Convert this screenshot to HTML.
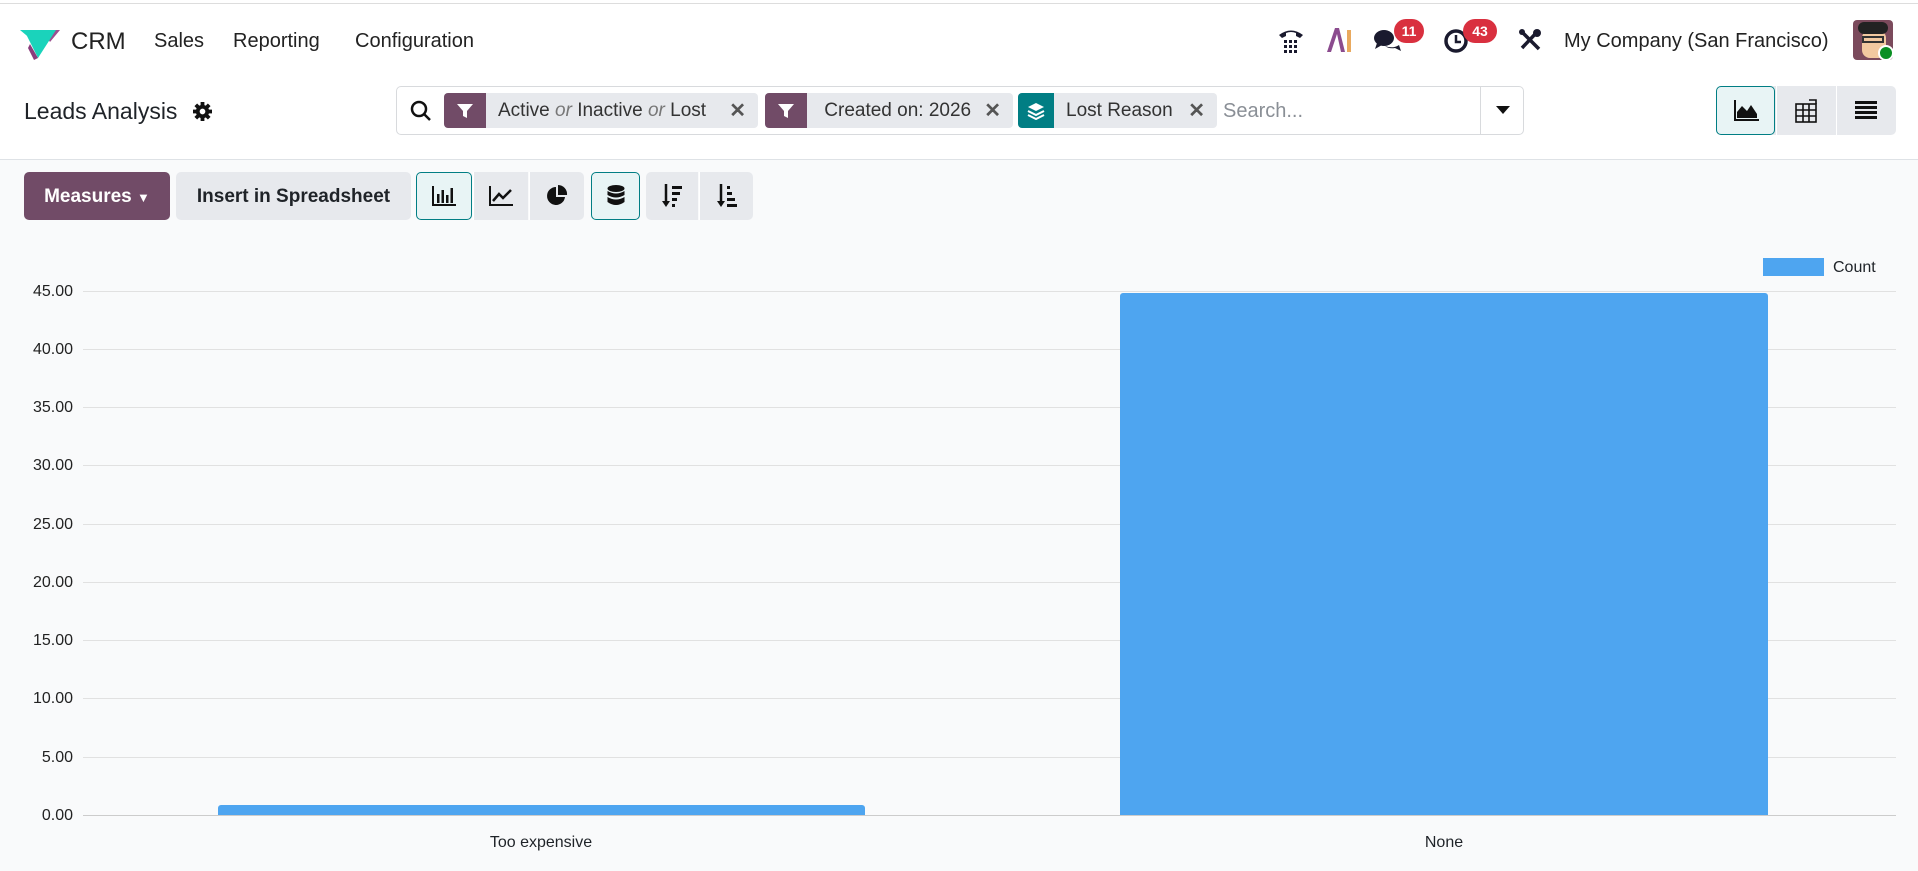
<!DOCTYPE html>
<html><head><meta charset="utf-8"><style>
*{box-sizing:border-box;margin:0;padding:0}
body{width:1918px;height:871px;background:#fff;font-family:"Liberation Sans",sans-serif;color:#1f2328;position:relative;overflow:hidden}
.a{position:absolute}
.nav{font-size:20px;color:#222}
.btn{position:absolute;background:#e7e9ed;border-radius:5px;height:48px;top:172px;display:flex;align-items:center;justify-content:center}
.chip{position:absolute;top:93px;height:35px;background:#e7e9ed;border-radius:4px;display:flex;align-items:center;font-size:19px;color:#333}
.chip .ic{width:42px;height:35px;border-radius:4px 0 0 4px;display:flex;align-items:center;justify-content:center;margin-right:12px}
.chip .x{margin-left:auto;margin-right:12px;color:#555;font-size:20px;font-weight:bold}
.yl{position:absolute;right:1845px;font-size:16px;color:#222;width:60px;text-align:right}
.gl{position:absolute;left:83px;width:1813px;height:1px;background:#e1e1e1}
</style></head><body>
<div class="a" style="left:0;top:3px;width:1918px;height:1px;background:#ddd"></div>
<svg class="a" style="left:20px;top:26px" width="40" height="36" viewBox="0 0 40 36"><polygon points="0,4 16,4 12,14" fill="#1ad3bb"/><polygon points="22,4 40,4 30,16" fill="#9b4f8f"/><polygon points="4,4 36,4 18,32" fill="#1ad3bb"/><polygon points="10,18 18,32 14,34 8,22" fill="#8a3c7c"/></svg>
<div class="a nav" style="left:71px;top:28px;font-size:24px">CRM</div>
<div class="a nav" style="left:154px;top:30px">Sales</div>
<div class="a nav" style="left:233px;top:30px">Reporting</div>
<div class="a nav" style="left:355px;top:30px">Configuration</div>
<svg class="a" style="left:1277px;top:26px" width="28" height="28" viewBox="0 0 28 28"><path d="M2 9 Q14 0 26 9 L23 12 L19 10 L19 7 Q14 5 9 7 L9 10 L5 12 Z" fill="#1a1a2e"/><g fill="#1a1a2e"><rect x="7" y="14" width="3" height="3"/><rect x="12" y="14" width="3" height="3"/><rect x="17" y="14" width="3" height="3"/><rect x="7" y="19" width="3" height="3"/><rect x="12" y="19" width="3" height="3"/><rect x="17" y="19" width="3" height="3"/><rect x="7" y="24" width="3" height="3"/><rect x="12" y="24" width="3" height="3"/><rect x="17" y="24" width="3" height="3"/></g></svg>
<svg class="a" style="left:1325px;top:28px" width="28" height="24" viewBox="0 0 28 24"><path d="M2 24 L10 0 L14 0 L20 24 L16 24 L12 6 L6 24Z" fill="#8b4b8e"/><rect x="22" y="2" width="4" height="22" fill="#e9a95e"/></svg>
<svg class="a" style="left:1373px;top:27px" width="30" height="28" viewBox="0 0 30 28"><ellipse cx="11" cy="11" rx="10" ry="8" fill="#1a1a2e"/><path d="M4 16 L2 22 L9 18Z" fill="#1a1a2e"/><path d="M12 19 Q20 22 26 18 L28 24 L22 21 Q16 22 12 19Z" fill="#1a1a2e"/></svg>
<div class="a" style="left:1394px;top:19px;width:30px;height:24px;border-radius:12px;background:#d9303f;color:#fff;font-size:14px;font-weight:bold;text-align:center;line-height:24px">11</div>
<svg class="a" style="left:1443px;top:27px" width="28" height="28" viewBox="0 0 28 28"><circle cx="13" cy="14" r="10" fill="none" stroke="#1a1a2e" stroke-width="3.5"/><path d="M13 8 V15 H18" stroke="#1a1a2e" stroke-width="2.5" fill="none"/></svg>
<div class="a" style="left:1463px;top:19px;width:34px;height:24px;border-radius:12px;background:#d9303f;color:#fff;font-size:14px;font-weight:bold;text-align:center;line-height:24px">43</div>
<svg class="a" style="left:1518px;top:28px" width="24" height="24" viewBox="0 0 24 24"><path d="M3 3 L21 21" stroke="#1a1a2e" stroke-width="3.5"/><path d="M20 3 L4 20" stroke="#1a1a2e" stroke-width="3.5"/><circle cx="19" cy="5" r="4" fill="#1a1a2e"/><circle cx="4" cy="4" r="3" fill="#1a1a2e"/></svg>
<div class="a nav" style="left:1564px;top:30px">My Company (San Francisco)</div>
<div class="a" style="left:1853px;top:20px;width:40px;height:40px;border-radius:4px;background:#7b4a5c;overflow:hidden"><div style="position:absolute;left:9px;top:10px;width:24px;height:28px;background:#f2c9a0;border-radius:8px"></div><div style="position:absolute;left:5px;top:2px;width:30px;height:12px;background:#222;border-radius:6px"></div><div style="position:absolute;left:9px;top:16px;width:22px;height:7px;border:2px solid #333"></div></div>
<div class="a" style="left:1878px;top:45px;width:16px;height:16px;border-radius:50%;background:#0a8f23;border:2px solid #fff"></div>
<div class="a" style="left:24px;top:98px;font-size:23px">Leads Analysis</div>
<svg class="a" style="left:193px;top:102px" width="19" height="19" viewBox="0 0 20 20"><g fill="#111"><circle cx="10" cy="10" r="7"/><rect x="8" y="0" width="4" height="20"/><rect x="0" y="8" width="20" height="4"/><rect x="8" y="0" width="4" height="20" transform="rotate(45 10 10)"/><rect x="8" y="0" width="4" height="20" transform="rotate(-45 10 10)"/></g><circle cx="10" cy="10" r="3" fill="#fff"/></svg>
<div class="a" style="left:396px;top:86px;width:1128px;height:49px;border:1px solid #d8dadd;border-radius:5px"></div>
<svg class="a" style="left:410px;top:100px" width="22" height="22" viewBox="0 0 22 22"><circle cx="9" cy="9" r="7" fill="none" stroke="#111" stroke-width="2.5"/><path d="M14 14 L20 20" stroke="#111" stroke-width="2.5"/></svg>
<div class="chip" style="left:444px;width:314px"><div class="ic" style="background:#714b67"><svg width="16" height="16" viewBox="0 0 16 16"><path d="M0 1 H16 L10 8 V15 L6 13 V8Z" fill="#fff"/></svg></div>Active&nbsp;<i style="color:#777">or</i>&nbsp;Inactive&nbsp;<i style="color:#777">or</i>&nbsp;Lost<span class="x">✕</span></div>
<div class="chip" style="left:765px;width:248px"><div class="ic" style="background:#714b67"><svg width="16" height="16" viewBox="0 0 16 16"><path d="M0 1 H16 L10 8 V15 L6 13 V8Z" fill="#fff"/></svg></div>&nbsp;Created on: 2026<span class="x">✕</span></div>
<div class="chip" style="left:1018px;width:199px"><div class="ic" style="background:#017e84;width:36px"><svg width="18" height="18" viewBox="0 0 18 18"><path d="M9 1 L17 5 L9 9 L1 5Z" fill="#fff"/><path d="M1 9 L9 13 L17 9" stroke="#fff" stroke-width="2" fill="none"/><path d="M1 13 L9 17 L17 13" stroke="#fff" stroke-width="2" fill="none"/></svg></div>Lost Reason<span class="x">✕</span></div>
<div class="a" style="left:1223px;top:100px;font-size:20px;color:#8a8f96">Search...</div>
<div class="a" style="left:1480px;top:87px;width:1px;height:47px;background:#d8dadd"></div>
<div class="a" style="left:1496px;top:106px;width:0;height:0;border-left:7px solid transparent;border-right:7px solid transparent;border-top:8px solid #111"></div>
<div class="a" style="left:1716px;top:86px;width:180px;height:49px;background:#e7e9ed;border-radius:5px"></div>
<div class="a" style="left:1716px;top:86px;width:59px;height:49px;background:#e8f4f5;border:1px solid #017e84;border-radius:5px"></div>
<svg class="a" style="left:1733px;top:100px" width="26" height="22" viewBox="0 0 26 22"><path d="M2 0 V20 H26" stroke="#111" stroke-width="2" fill="none"/><path d="M4 18 L4 12 L9 6 L14 11 L18 5 L24 14 V18Z" fill="#111"/></svg>
<div class="a" style="left:1776px;top:86px;width:1px;height:49px;background:#fff"></div>
<div class="a" style="left:1836px;top:86px;width:1px;height:49px;background:#fff"></div>
<svg class="a" style="left:1795px;top:99px" width="22" height="24" viewBox="0 0 22 24"><g stroke="#111" stroke-width="1.6" fill="none"><rect x="1" y="5" width="20" height="18"/><path d="M1 11 H21 M1 17 H21 M8 5 V23 M14 5 V23 M14 1 H21 V5"/></g></svg>
<svg class="a" style="left:1855px;top:101px" width="22" height="18" viewBox="0 0 22 18"><g fill="#111"><rect y="0" width="22" height="3"/><rect y="5" width="22" height="3"/><rect y="10" width="22" height="3"/><rect y="15" width="22" height="3"/></g></svg>
<div class="a" style="left:0;top:159px;width:1918px;height:712px;background:#f9fafb;border-top:1px solid #dee2e6"></div>
<div class="btn" style="left:24px;width:146px;background:#714b67;color:#fff;font-weight:bold;font-size:19px;padding-top:2px">Measures&nbsp;<span style="font-size:13px">▼</span></div>
<div class="btn" style="left:176px;width:235px;font-weight:bold;font-size:19px;padding-top:2px">Insert in Spreadsheet</div>
<div class="btn" style="left:416px;width:56px;background:#e8f4f5;border:1px solid #017e84"><svg width="24" height="20" viewBox="0 0 24 20"><path d="M1 0 V19 H24" stroke="#111" stroke-width="2" fill="none"/><g fill="#111"><rect x="5" y="8" width="2.5" height="9"/><rect x="9.5" y="4" width="2.5" height="13"/><rect x="14" y="9" width="2.5" height="8"/><rect x="18.5" y="2" width="2.5" height="15"/></g></svg></div>
<div class="btn" style="left:474px;width:54px;border-radius:0"><svg width="24" height="20" viewBox="0 0 24 20"><path d="M1 0 V19 H24" stroke="#111" stroke-width="2" fill="none"/><path d="M4 15 L10 8 L14 12 L22 4" stroke="#111" stroke-width="2.5" fill="none"/></svg></div>
<div class="btn" style="left:530px;width:54px;border-radius:0 5px 5px 0"><svg width="22" height="22" viewBox="0 0 22 22"><path d="M10 2 A9 9 0 1 0 19 12 H10Z" fill="#111"/><path d="M12 0 A9 9 0 0 1 21 10 H12Z" fill="#111"/></svg></div>
<div class="btn" style="left:591px;width:49px;background:#e8f4f5;border:1px solid #017e84"><svg width="18" height="22" viewBox="0 0 18 22"><g fill="#111"><ellipse cx="9" cy="3.5" rx="8.5" ry="3.5"/><path d="M0.5 6 Q9 11 17.5 6 V10 Q9 15 0.5 10Z"/><path d="M0.5 12 Q9 17 17.5 12 V17 Q9 23 0.5 17Z"/></g></svg></div>
<div class="btn" style="left:646px;width:52px;border-radius:5px 0 0 5px"><svg width="22" height="24" viewBox="0 0 22 24"><path d="M5 0 V20" stroke="#111" stroke-width="2.5"/><path d="M1 17 L5 23 L9 17Z" fill="#111"/><g fill="#111"><rect x="11" y="2" width="10" height="3"/><rect x="11" y="8" width="8" height="3"/><rect x="11" y="14" width="5" height="3"/><rect x="11" y="20" width="3" height="3"/></g></svg></div>
<div class="btn" style="left:700px;width:53px;border-radius:0 5px 5px 0"><svg width="22" height="24" viewBox="0 0 22 24"><path d="M5 0 V20" stroke="#111" stroke-width="2.5"/><path d="M1 17 L5 23 L9 17Z" fill="#111"/><g fill="#111"><rect x="11" y="2" width="3" height="3"/><rect x="11" y="8" width="5" height="3"/><rect x="11" y="14" width="8" height="3"/><rect x="11" y="20" width="10" height="3"/></g></svg></div>
<div class="a" style="left:473px;top:172px;width:1px;height:48px;background:#fff"></div>
<div class="a" style="left:529px;top:172px;width:1px;height:48px;background:#fff"></div>
<div class="a" style="left:699px;top:172px;width:1px;height:48px;background:#fff"></div>
<div class="gl" style="top:291px"></div><div class="gl" style="top:349px"></div><div class="gl" style="top:407px"></div><div class="gl" style="top:465px"></div><div class="gl" style="top:524px"></div><div class="gl" style="top:582px"></div><div class="gl" style="top:640px"></div><div class="gl" style="top:698px"></div><div class="gl" style="top:757px"></div><div class="gl" style="top:815px;background:#ccc"></div>
<div class="yl" style="top:283px">45.00</div><div class="yl" style="top:341px">40.00</div><div class="yl" style="top:399px">35.00</div><div class="yl" style="top:457px">30.00</div><div class="yl" style="top:516px">25.00</div><div class="yl" style="top:574px">20.00</div><div class="yl" style="top:632px">15.00</div><div class="yl" style="top:690px">10.00</div><div class="yl" style="top:749px">5.00</div><div class="yl" style="top:807px">0.00</div>
<div class="a" style="left:218px;top:805px;width:647px;height:10px;background:#4ea5f0;border-radius:3px 3px 0 0"></div>
<div class="a" style="left:1120px;top:293px;width:648px;height:522px;background:#4ea5f0;border-radius:3px 3px 0 0"></div>
<div class="a" style="left:441px;top:834px;width:200px;text-align:center;font-size:16px">Too expensive</div>
<div class="a" style="left:1344px;top:834px;width:200px;text-align:center;font-size:16px">None</div>
<div class="a" style="left:1763px;top:258px;width:61px;height:18px;background:#4ea5f0"></div>
<div class="a" style="left:1833px;top:259px;font-size:16px">Count</div>
</body></html>
